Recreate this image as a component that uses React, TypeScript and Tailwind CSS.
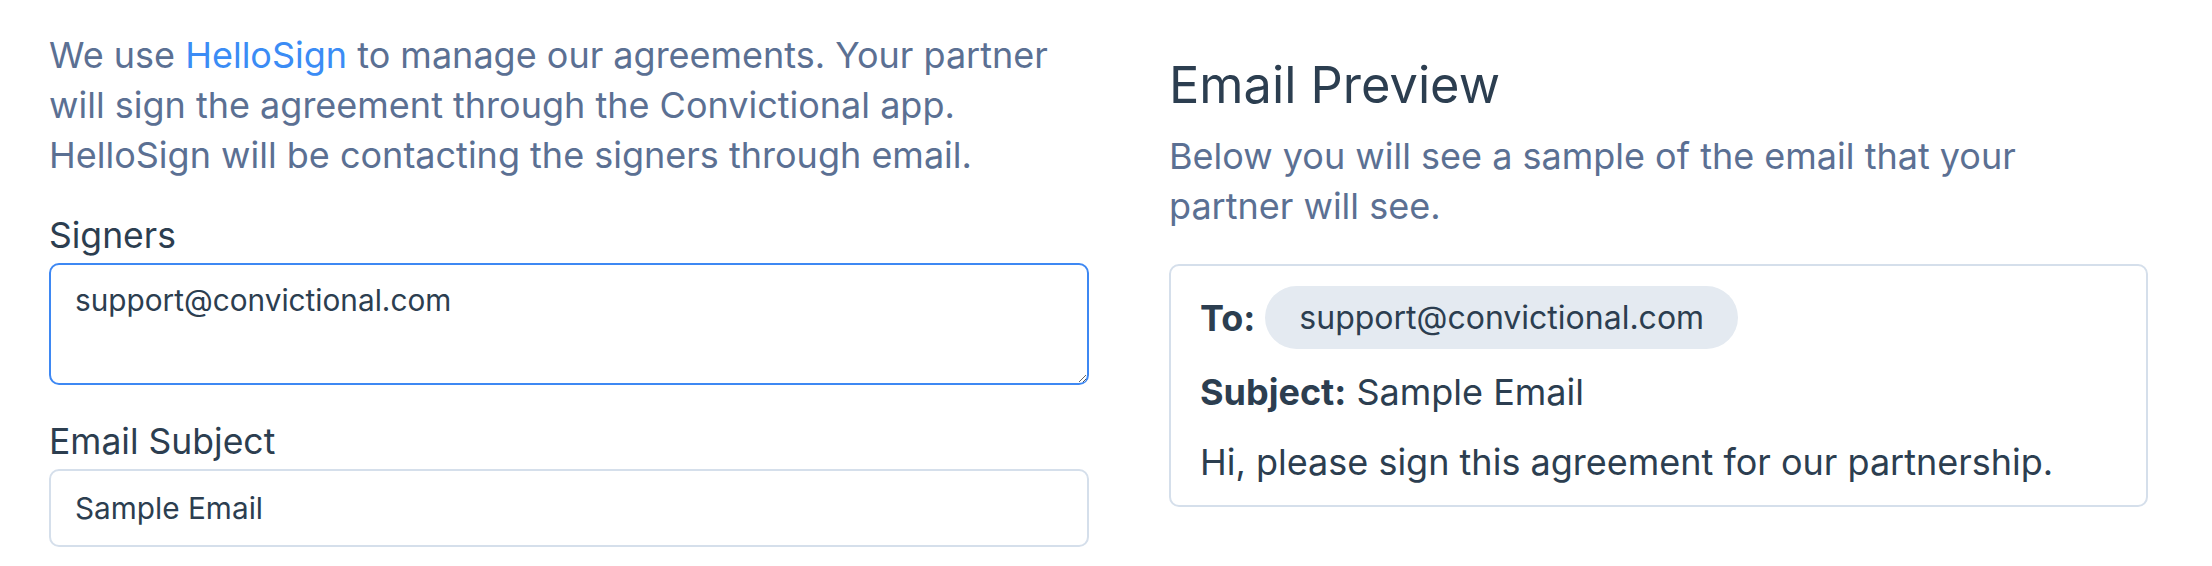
import { useEffect, useRef } from 'react';

export default function App() {
  const signersRef = useRef<HTMLTextAreaElement>(null);

  // keep the signers box focused with the caret after the address, as in the form
  useEffect(() => {
    const el = signersRef.current;
    if (!el) return;
    el.focus();
    el.setSelectionRange(el.value.length, el.value.length);
  }, []);

  return (
    <div className="flex gap-[80px] px-[49px] pt-[30px] font-['Inter','Noto_Sans',sans-serif] bg-white min-h-screen">
      {/* Agreement form */}
      <div className="w-[1040px] shrink-0">
        <p className="text-[36px] leading-[50px] text-[#5b7093]">
          We use <a className="text-[#3b8cf5]">HelloSign</a> to manage our agreements. Your partner will sign the
          agreement through the Convictional app. HelloSign will be contacting the signers through email.
        </p>

        <label className="block mt-[31px] text-[35.5px] leading-[50px] text-[#2c3e50]">Signers</label>
        <textarea
          ref={signersRef}
          className="block w-full h-[122px] mt-[2px] border-2 border-[#3e88f3] rounded-[10px] px-[24px] py-[13px] text-[29.75px] leading-[45px] text-[#2c3e50] caret-[#2c3e50] outline-none"
          defaultValue="support@convictional.com"
        />

        <label className="block mt-[32px] text-[35.5px] leading-[50px] text-[#2c3e50]">Email Subject</label>
        <input
          className="block w-full h-[78px] mt-[2px] border-2 border-[#d5dfeb] rounded-[10px] px-[24px] text-[29.75px] text-[#2c3e50] outline-none"
          defaultValue="Sample Email"
        />
      </div>

      {/* Email preview */}
      <div className="w-[979px] shrink-0">
        <h2 className="mt-[25px] text-[50.5px] leading-[59px] text-[#2c3e50]">Email Preview</h2>
        <p className="mt-[17px] max-w-[880px] text-[36px] leading-[50px] text-[#5b7093]">
          Below you will see a sample of the email that your partner will see.
        </p>

        <div className="mt-[33px] border-2 border-[#d5dfeb] rounded-[10px] px-[29px] pt-[20px] pb-[18px] text-[36px] leading-[50px] text-[#2c3e50]">
          <div className="flex items-center gap-[10px]">
            <span className="font-bold">To:</span>
            <span className="h-[63px] flex items-center px-[34px] rounded-full bg-[#e4eaf1] text-[32px]">
              support@convictional.com
            </span>
          </div>
          <p className="mt-[18px]">
            <span className="font-bold">Subject:</span> Sample Email
          </p>
          <p className="mt-[20px]">Hi, please sign this agreement for our partnership.</p>
        </div>
      </div>
    </div>
  );
}
